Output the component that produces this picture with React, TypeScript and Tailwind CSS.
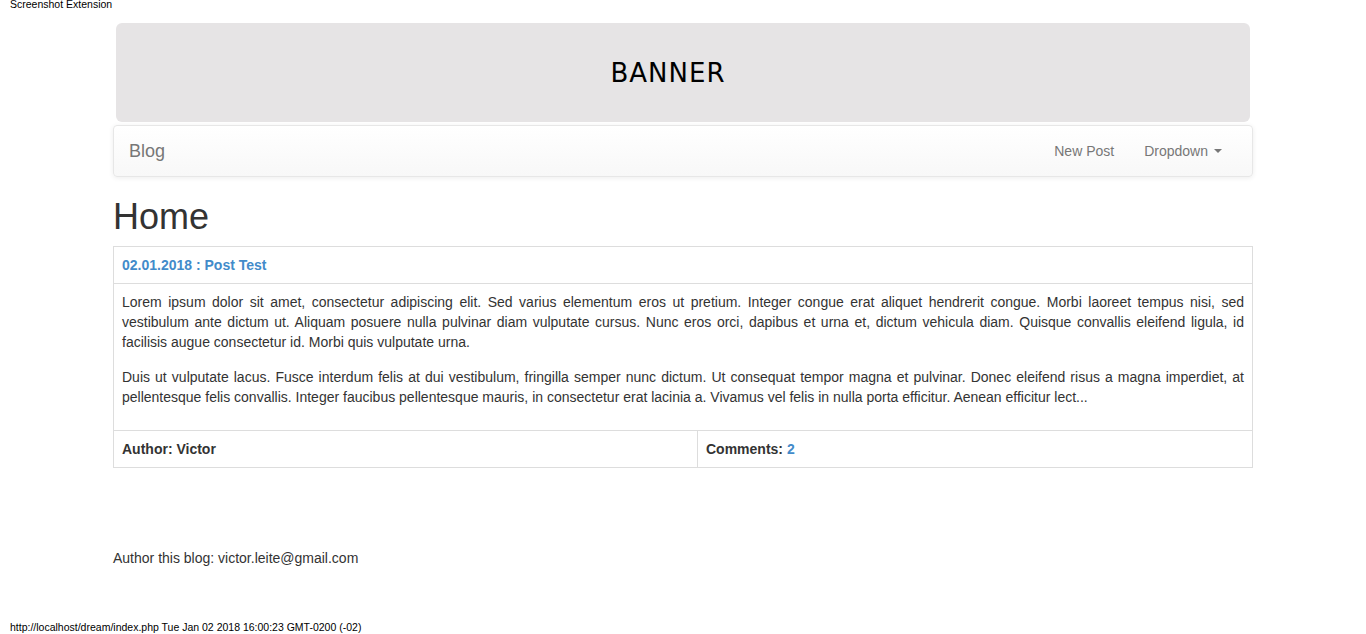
export default function App() {
  return (
    <div className="min-h-[634px] bg-white font-['Liberation_Sans',Arial,sans-serif] text-[14px] leading-[20px] text-[#333]">
      {/* extension header */}
      <div className="h-[10px] px-[10px] text-[10.5px] leading-[9px] text-black">Screenshot Extension</div>

      <div className="mx-auto w-[1140px]">
        {/* banner */}
        <div className="mx-[3px] mt-[13px] flex h-[99px] items-center justify-center rounded-[6px] bg-[#e6e4e5] pr-[30px]">
          <span className="font-['DejaVu_Sans',sans-serif] text-[26px] leading-none tracking-[1px] text-black">BANNER</span>
        </div>

        {/* navbar */}
        <nav className="mt-[3px] flex h-[52px] items-center justify-between rounded-[4px] border border-[#e7e7e7] bg-gradient-to-b from-white to-[#f8f8f8] shadow-[inset_0_1px_0_rgba(255,255,255,0.15),0_1px_5px_rgba(0,0,0,0.075)]">
          <span className="pl-[15px] text-[18px] leading-[20px] text-[#777]">Blog</span>
          <div className="flex pr-[15px] text-[#777]">
            <span className="px-[15px] leading-[20px]">New Post</span>
            <span className="flex items-center px-[15px] leading-[20px]">
              Dropdown
              <span className="ml-[6px] inline-block h-0 w-0 border-x-4 border-t-4 border-x-transparent border-t-[#777]" />
            </span>
          </div>
        </nav>

        <h1 className="mt-[20px] h-[39px] text-[36px] leading-[39px] font-normal text-[#333]">Home</h1>

        {/* post */}
        <div className="mt-[10px] border border-[#ddd]">
          <div className="border-b border-[#ddd] p-[8px] font-bold text-[#428bca]">02.01.2018 : Post Test</div>
          <div className="border-b border-[#ddd] p-[8px] text-justify">
            <p className="mb-[15px]">
              Lorem ipsum dolor sit amet, consectetur adipiscing elit. Sed varius elementum eros ut pretium. Integer congue erat aliquet hendrerit congue. Morbi laoreet tempus nisi, sed vestibulum ante dictum ut. Aliquam posuere nulla pulvinar diam vulputate cursus. Nunc eros orci, dapibus et urna et, dictum vehicula diam. Quisque convallis eleifend ligula, id facilisis augue consectetur id. Morbi quis vulputate urna.
            </p>
            <p className="mb-[15px]">
              Duis ut vulputate lacus. Fusce interdum felis at dui vestibulum, fringilla semper nunc dictum. Ut consequat tempor magna et pulvinar. Donec eleifend risus a magna imperdiet, at pellentesque felis convallis. Integer faucibus pellentesque mauris, in consectetur erat lacinia a. Vivamus vel felis in nulla porta efficitur. Aenean efficitur lect...
            </p>
          </div>
          <div className="flex font-bold">
            <div className="w-[584px] border-r border-[#ddd] p-[8px]">Author: Victor</div>
            <div className="flex-1 p-[8px]">
              Comments: <span className="text-[#428bca]">2</span>
            </div>
          </div>
        </div>

        <div className="mt-[80px]">Author this blog: victor.leite@gmail.com</div>
      </div>

      {/* extension footer */}
      <div className="mt-[54px] px-[10px] text-[10.5px] leading-[10px] text-black">
        http://localhost/dream/index.php Tue Jan 02 2018 16:00:23 GMT-0200 (-02)
      </div>
    </div>
  );
}
